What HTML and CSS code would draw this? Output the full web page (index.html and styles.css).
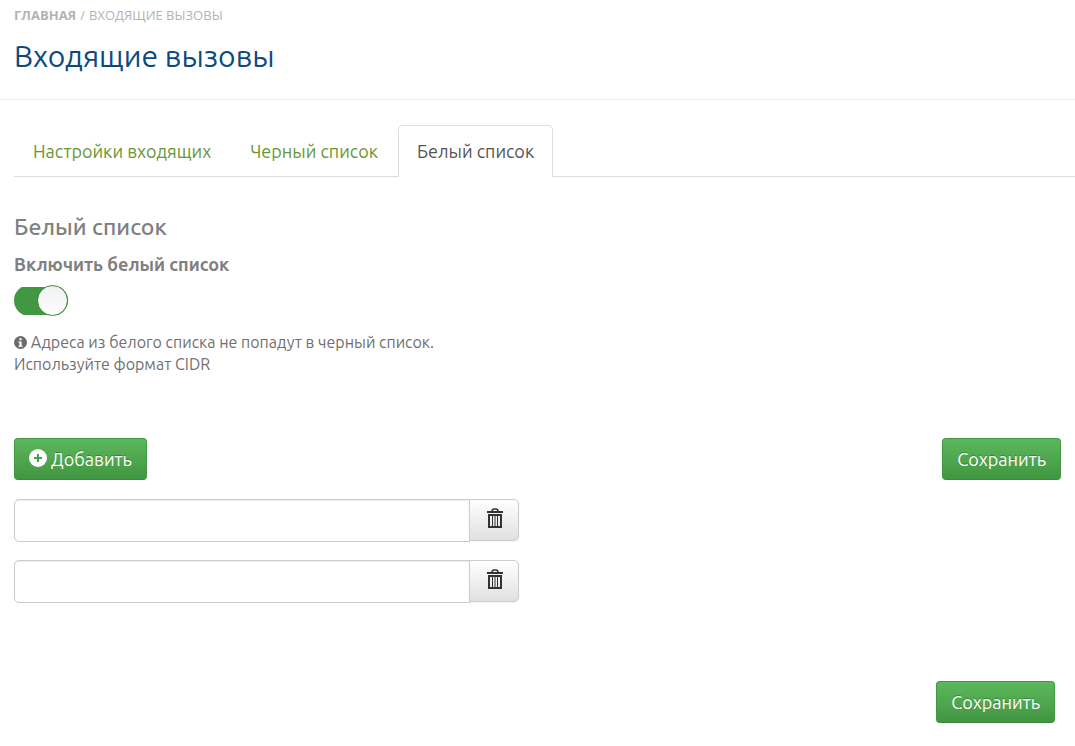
FILE: index.html
```html
<!DOCTYPE html>
<html lang="ru">
<head>
<meta charset="utf-8">
<meta name="viewport" content="width=device-width, initial-scale=1">
<title>Входящие вызовы</title>
<link rel="stylesheet" href="styles.css">
</head>
<body>
<header class="page-header">
  <nav class="breadcrumb"><a class="breadcrumb-home" href="#">Главная</a><span class="breadcrumb-divider">/</span><span>Входящие вызовы</span></nav>
  <h1 class="page-title">Входящие вызовы</h1>
</header>
<main class="content">
  <nav class="tabs">
    <a class="tab" href="#">Настройки входящих</a>
    <a class="tab" href="#">Черный список</a>
    <a class="tab tab-active" href="#" aria-current="page">Белый список</a>
  </nav>
  <form class="panel">
    <h2 class="section-title">Белый список</h2>
    <label class="field-label" for="enable">Включить белый список</label>
    <input class="switch" type="checkbox" id="enable" checked>
    <p class="hint"><svg class="hint-icon" viewBox="0 0 12 12" aria-hidden="true"><circle cx="6" cy="6" r="6" fill="#6b6b6b"/><path d="M5 2h2v2H5zM4 5h3v4h1v1H4V9h1V6H4z" fill="#fff"/></svg> Адреса из белого списка не попадут в черный список.<br>Используйте формат CIDR</p>
    <div class="toolbar">
      <button class="btn btn-green" type="button"><svg class="plus-icon" viewBox="0 0 18 18" aria-hidden="true"><circle cx="9" cy="9" r="9" fill="#fff"/><path d="M8 5h2v3h3v2h-3v3H8v-3H5V8h3z" fill="#46a046"/></svg> Добавить</button>
      <button class="btn btn-green" type="submit">Сохранить</button>
    </div>
    <div class="address">
      <input class="address-input" type="text" aria-label="Адрес 1">
      <button class="btn btn-remove" type="button" aria-label="Удалить адрес 1"><svg class="trash-icon" viewBox="0 0 18 20" aria-hidden="true"><path d="M6 3.500Q6 1 8 1h2q2 0 2 2.500" fill="none" stroke="#333" stroke-width="1.500"/><path d="M1 3h16v2H1zM2 6h14v2H2zM2 8h2v10H2zM6 8h1v10H6zM8.500 8h1v10h-1zM11 8h1v10h-1zM14 8h2v10h-2zM2 18h14v2H2z" fill="#333"/></svg></button>
    </div>
    <div class="address">
      <input class="address-input" type="text" aria-label="Адрес 2">
      <button class="btn btn-remove" type="button" aria-label="Удалить адрес 2"><svg class="trash-icon" viewBox="0 0 18 20" aria-hidden="true"><path d="M6 3.500Q6 1 8 1h2q2 0 2 2.500" fill="none" stroke="#333" stroke-width="1.500"/><path d="M1 3h16v2H1zM2 6h14v2H2zM2 8h2v10H2zM6 8h1v10H6zM8.500 8h1v10h-1zM11 8h1v10h-1zM14 8h2v10h-2zM2 18h14v2H2z" fill="#333"/></svg></button>
    </div>
    <div class="form-footer"><button class="btn btn-green" type="submit">Сохранить</button></div>
  </form>
</main>
</body>
</html>
```
FILE: styles.css
```css
*, *::before { box-sizing: border-box; }
body {
  margin: 0;
  background: #fff;
  color: #777;
  font-family: Ubuntu, "Noto Sans", "Open Sans", sans-serif;
}
.page-header {
  padding: 5px 14px 23px;
  border-bottom: 1px solid #ebebeb;
}
.breadcrumb {
  font: 13px/20px "Open Sans", sans-serif;
  color: #b3b3b3;
  text-transform: uppercase;
}
.breadcrumb-home { color: #b3b3b3; font-weight: 700; text-decoration: none; }
.breadcrumb-divider { margin: 0 4px; }
.page-title {
  margin: 11px 0 0;
  color: #0b4a80;
  font-size: 30px;
  font-weight: 400;
  line-height: 40px;
}
.content { padding-left: 14px; }
.tabs {
  display: flex;
  gap: 1px;
  margin-top: 25px;
  border-bottom: 1px solid #ddd;
}
.tab {
  padding: 13px 18px;
  border: 1px solid transparent;
  border-bottom: 0;
  border-radius: 5px 5px 0 0;
  color: #6a9636;
  font-size: 18px;
  line-height: 24px;
  text-decoration: none;
}
.tab-active {
  margin-bottom: -1px;
  border-color: #ddd;
  background: #fff;
  color: #555;
}
.panel { padding: 35px 14px 0 0; }
.section-title {
  margin: 0 0 10px;
  color: #808080;
  font-size: 23px;
  font-weight: 500;
  line-height: 30px;
}
.field-label {
  display: block;
  margin-bottom: 9px;
  color: #808080;
  font-size: 18px;
  font-weight: 700;
  line-height: 24px;
}
.switch {
  appearance: none;
  display: flex;
  align-items: center;
  width: 54px;
  height: 31px;
  margin: 0;
  border-radius: 16px;
  background: linear-gradient(#429743, #429743) center / 100% 28px no-repeat;
}
.switch::before {
  content: "";
  width: 31px;
  height: 31px;
  border: 1px solid #398a3b;
  border-radius: 50%;
  background: linear-gradient(#f0f0f0, #fff);
}
.switch:checked { justify-content: flex-end; }
.hint {
  margin: 15px 0 0;
  color: #707070;
  font-size: 16px;
  line-height: 22px;
}
.hint-icon { width: 13px; height: 13px; vertical-align: -1px; }
.toolbar {
  display: flex;
  justify-content: space-between;
  margin: 63px 0 19px;
}
.btn {
  border: 1px solid #ccc;
  border-radius: 4px;
  font-family: inherit;
  font-size: 18px;
  line-height: 24px;
  cursor: pointer;
}
.btn-green {
  padding: 8px 14px;
  border-color: #419743 #419743 #398a3b;
  background: linear-gradient(#5cb85c, #419641);
  color: #fff;
  text-shadow: 0 -1px 0 rgba(0, 0, 0, .25);
}
.plus-icon { width: 18px; height: 18px; vertical-align: -1px; }
.address {
  display: flex;
  width: 505px;
  max-width: 100%;
  height: 43px;
  margin-bottom: 18px;
}
.address-input {
  flex: 1;
  min-width: 0;
  padding: 0 12px;
  border: 1px solid #ccc;
  border-radius: 5px 0 0 5px;
  box-shadow: inset 0 1px 1px rgba(0, 0, 0, .075);
  font: inherit;
}
.btn-remove {
  width: 50px;
  height: 42px;
  margin-left: -1px;
  padding: 0 0 8px 1px;
  border-radius: 0 5px 5px 0;
  background: linear-gradient(#fff, #e0e0e0);
  box-shadow: 0 1px 2px rgba(0, 0, 0, .05);
}
.trash-icon { width: 18px; height: 20px; vertical-align: middle; }
.form-footer {
  display: flex;
  justify-content: flex-end;
  margin: 78px 6px 22px 0;
}
```
